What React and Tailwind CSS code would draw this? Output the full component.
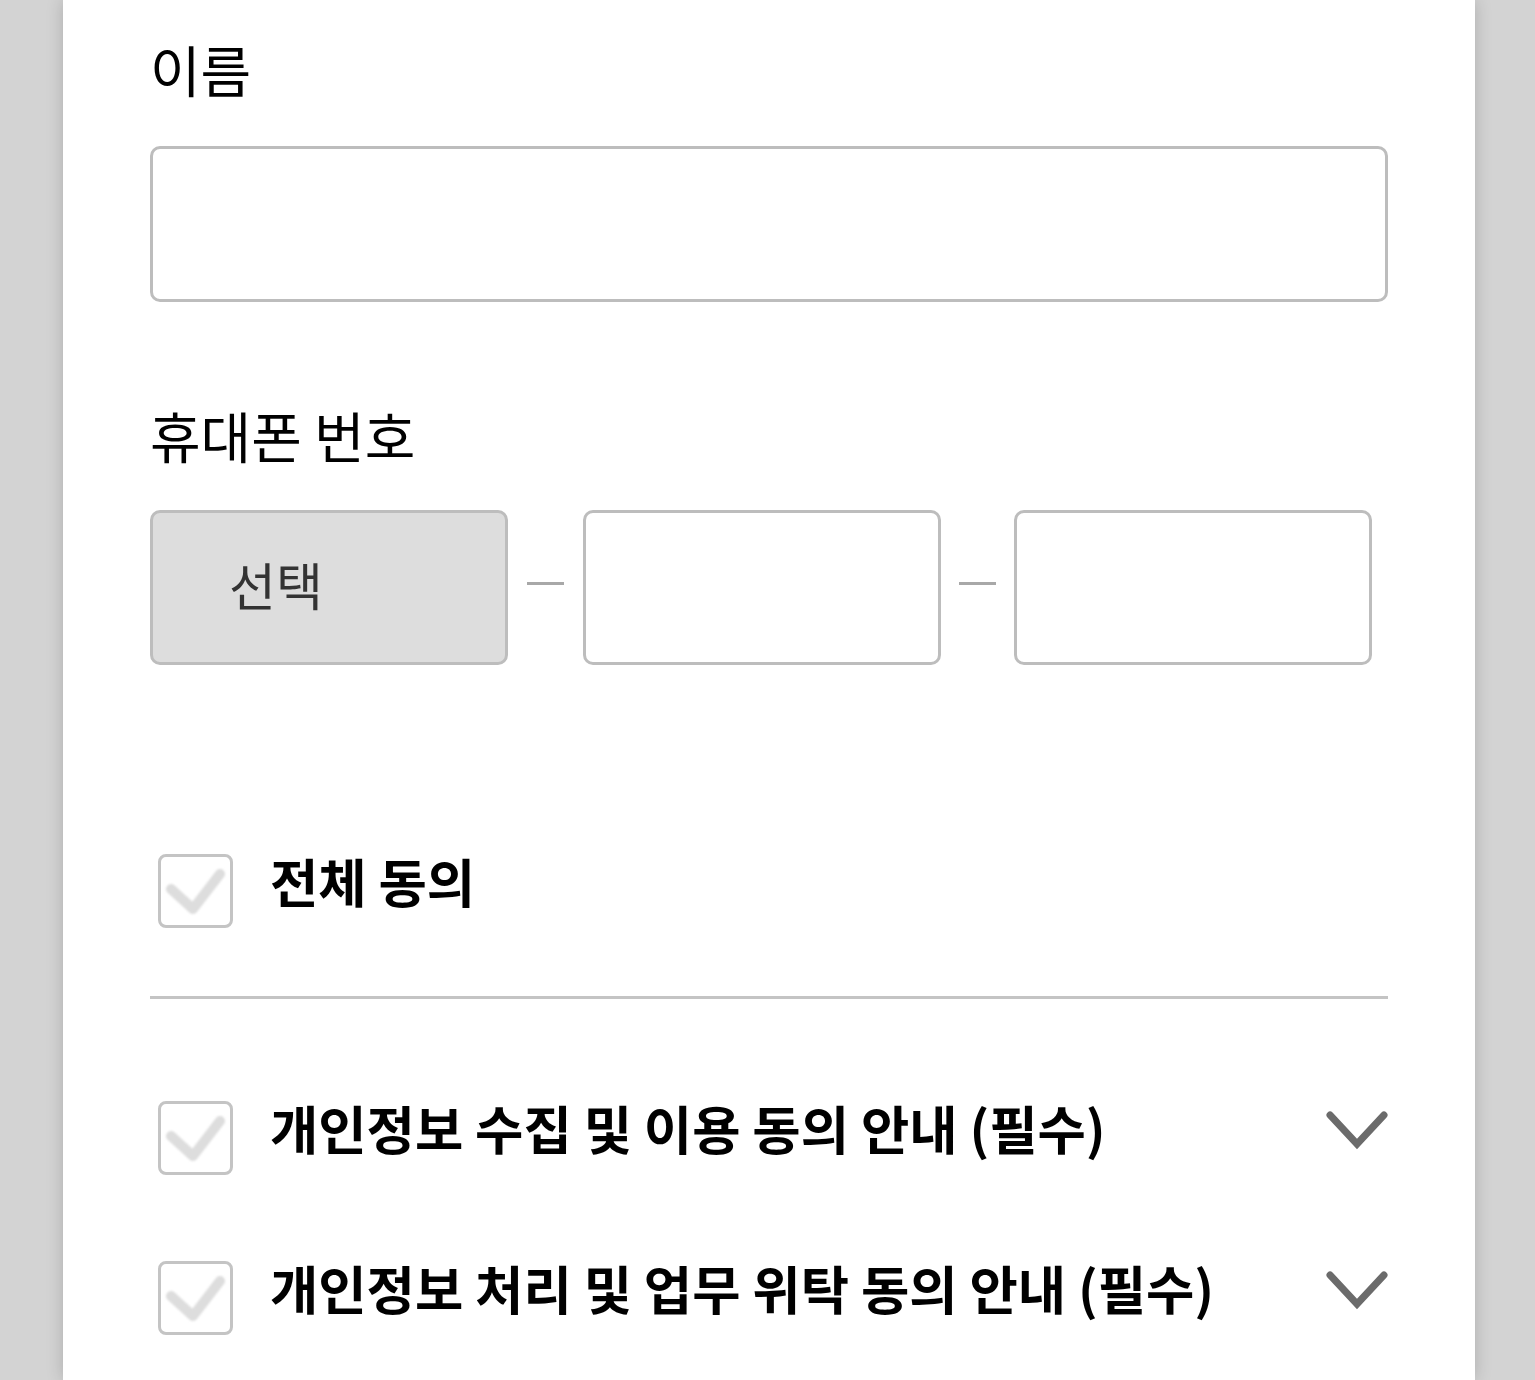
import React from 'react';

const FONT = { fontFamily: '"Noto Sans CJK KR", "Noto Sans", sans-serif' };

function CheckBox() {
  return (
    <div className="relative w-[75px] h-[74px] shrink-0 rounded-[8px] border-[3px] border-[#c4c4c4] bg-white">
      <svg viewBox="0 0 75 74" className="absolute -inset-[3px] w-[75px] h-[74px] blur-[1.2px]">
        <path d="M13 35 L35 55 L62 20" fill="none" stroke="#dddddd" strokeWidth="10" strokeLinecap="round" strokeLinejoin="round" />
      </svg>
    </div>
  );
}

function Chevron() {
  return (
    <svg width="62" height="44" viewBox="0 0 62 44" className="shrink-0 -translate-y-[7px]">
      <path d="M4 6 L31 35 L58 6" fill="none" stroke="#6b6b6b" strokeWidth="7" strokeLinecap="round" strokeLinejoin="miter" />
    </svg>
  );
}

function AgreeRow({ label, chevron, className = '' }) {
  return (
    <div className={`flex items-center pl-[8px] ${className}`}>
      <CheckBox />
      <span className="ml-[37px] flex-1 text-[52.5px] font-bold leading-[60px] text-black -translate-y-[11px]">{label}</span>
      {chevron && <Chevron />}
    </div>
  );
}

export default function App() {
  return (
    <div className="min-h-[1380px] w-full bg-[#d3d3d3] overflow-hidden" style={FONT}>
      <div className="ml-[63px] w-[1412px] min-h-[1380px] bg-white shadow-[0_0_16px_rgba(0,0,0,0.18)] px-[87px] pt-[28px]">
        {/* 이름 */}
        <label className="block text-[55px] leading-[80px] text-black">이름</label>
        <div className="mt-[38px] h-[156px] rounded-[10px] border-[3px] border-[#bdbdbd] bg-white" />

        {/* 휴대폰 번호 */}
        <label className="block mt-[92px] text-[55px] leading-[80px] text-black">휴대폰 번호</label>
        <div className="mt-[36px] flex items-center">
          <div className="w-[358px] h-[155px] rounded-[10px] border-[3px] border-[#bdbdbd] bg-[#dddddd] flex items-center pl-[76px]">
            <span className="text-[51px] leading-[60px] text-[#333333] -translate-y-[4px]">선택</span>
          </div>
          <div className="w-[75px] flex justify-center -translate-y-[4px]">
            <div className="w-[37px] h-[3px] bg-[#a8a8a8]" />
          </div>
          <div className="w-[358px] h-[155px] rounded-[10px] border-[3px] border-[#bdbdbd] bg-white" />
          <div className="w-[73px] flex justify-center -translate-y-[4px]">
            <div className="w-[37px] h-[3px] bg-[#a8a8a8]" />
          </div>
          <div className="w-[358px] h-[155px] rounded-[10px] border-[3px] border-[#bdbdbd] bg-white" />
        </div>

        {/* 전체 동의 */}
        <AgreeRow label="전체 동의" className="mt-[189px]" />
        <div className="mt-[68px] h-[3px] bg-[#c4c4c4]" />

        <AgreeRow label="개인정보 수집 및 이용 동의 안내 (필수)" chevron className="mt-[102px]" />
        <AgreeRow label="개인정보 처리 및 업무 위탁 동의 안내 (필수)" chevron className="mt-[86px]" />
      </div>
    </div>
  );
}
